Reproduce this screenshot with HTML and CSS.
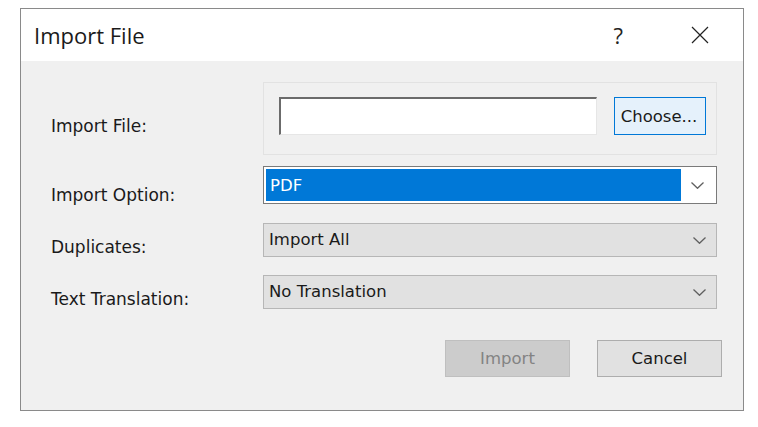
FILE: index.html
```html
<!DOCTYPE html>
<html lang="en">
<head>
<meta charset="utf-8">
<title>Import File</title>
<link rel="stylesheet" href="styles.css">
</head>
<body>
<div class="dialog">
  <div class="titlebar">
    <span class="title">Import File</span>
    <div class="title-actions">
      <span class="help">?</span>
      <svg class="close" width="18" height="18" viewBox="0 0 18 18">
        <path d="M1 1 L17 17 M17 1 L1 17" stroke="#222" stroke-width="1.2" fill="none"/>
      </svg>
    </div>
  </div>
  <div class="body">
    <div class="row">
      <span class="label">Import File:</span>
      <div class="filegroup">
        <div class="textinput"></div>
        <button class="btn btn-choose">Choose...</button>
      </div>
    </div>
    <div class="row row-option">
      <span class="label label-low">Import Option:</span>
      <div class="combo combo-open">
        <span class="combo-selected">PDF</span>
        <span class="combo-arrow"><svg width="13" height="7" viewBox="0 0 13 7"><path d="M0.5 0.5 L6.5 6.3 L12.5 0.5" stroke="#606060" stroke-width="1.3" fill="none"/></svg></span>
      </div>
    </div>
    <div class="row row-dup">
      <span class="label">Duplicates:</span>
      <div class="combo">
        <span class="combo-text">Import All</span>
        <span class="combo-arrow"><svg width="13" height="7" viewBox="0 0 13 7"><path d="M0.5 0.5 L6.5 6.3 L12.5 0.5" stroke="#606060" stroke-width="1.3" fill="none"/></svg></span>
      </div>
    </div>
    <div class="row row-trans">
      <span class="label">Text Translation:</span>
      <div class="combo">
        <span class="combo-text">No Translation</span>
        <span class="combo-arrow"><svg width="13" height="7" viewBox="0 0 13 7"><path d="M0.5 0.5 L6.5 6.3 L12.5 0.5" stroke="#606060" stroke-width="1.3" fill="none"/></svg></span>
      </div>
    </div>
    <div class="footer">
      <button class="btn btn-action btn-disabled">Import</button>
      <button class="btn btn-action">Cancel</button>
    </div>
  </div>
</div>
</body>
</html>
```

FILE: styles.css
```css
* { box-sizing: border-box; }

html, body {
  margin: 0;
  padding: 0;
  background: #ffffff;
}

body {
  font-family: "DejaVu Sans", Tahoma, sans-serif;
  font-size: 16.5px;
  color: #1a1a1a;
}

.dialog {
  margin: 8px 0 0 20px;
  width: 724px;
  height: 403px;
  border: 1px solid #8a8a8a;
  display: flex;
  flex-direction: column;
  background: #f0f0f0;
}

.titlebar {
  height: 52px;
  flex: none;
  background: #ffffff;
  display: flex;
  align-items: center;
  justify-content: space-between;
  padding: 0 34px 0 13px;
}

.title {
  font-family: "Open Sans", "Noto Sans", sans-serif;
  font-size: 22px;
  color: #1a1a1a;
  line-height: 1;
}

.title-actions {
  display: flex;
  align-items: center;
  gap: 68px;
}

.help {
  font-family: "Open Sans", "Noto Sans", sans-serif;
  font-size: 22px;
  line-height: 1;
  color: #222;
}

.close { display: block; }

.body {
  flex: 1;
  padding: 21px 21px 0 30px;
  display: flex;
  flex-direction: column;
}

.row {
  display: flex;
  align-items: center;
}

.label {
  width: 212px;
  flex: none;
  padding-top: 14px;
  line-height: 18px;
  font-size: 17px;
  color: #1a1a1a;
}

.label-low { padding-top: 19px; }

.filegroup {
  width: 454px;
  height: 73px;
  border: 1px solid #e2e2e2;
  padding: 14px 0 0 15px;
  display: flex;
  align-items: flex-start;
  gap: 17px;
}

.textinput {
  width: 318px;
  height: 38px;
  background: #fff;
  border-top: 2px solid #6b6b6b;
  border-left: 2px solid #6b6b6b;
  border-right: 1px solid #e6e6e6;
  border-bottom: 1px solid #e6e6e6;
}

.btn {
  font-family: "DejaVu Sans", Tahoma, sans-serif;
  font-size: 16.5px;
  color: #1a1a1a;
  background: #e1e1e1;
  border: 1px solid #adadad;
  padding: 0;
  margin: 0;
}

.btn-choose {
  width: 92px;
  height: 38px;
  background: #e5f1fb;
  border-color: #0078d7;
  padding-right: 2px;
}

.row-option { margin-top: 11px; }
.row-dup { margin-top: 19px; }
.row-trans { margin-top: 18px; }

.combo {
  width: 454px;
  height: 34px;
  background: #e1e1e1;
  border: 1px solid #b6b6b6;
  display: flex;
  align-items: center;
}

.combo-text {
  flex: 1;
  padding-left: 5px;
  line-height: 20px;
}

.combo-open {
  height: 38px;
  background: #fff;
  border-color: #7a7a7a;
  padding: 2px;
  align-items: stretch;
}

.combo-selected {
  flex: 1;
  background: #0078d7;
  color: #fff;
  padding-left: 4px;
  display: flex;
  align-items: center;
}

.combo-arrow {
  width: 33px;
  flex: none;
  display: flex;
  align-items: center;
  justify-content: center;
}

.combo-arrow svg { display: block; }

.footer {
  margin-top: 31px;
  display: flex;
  justify-content: flex-end;
  gap: 27px;
}

.btn-action {
  width: 125px;
  height: 37px;
}

.btn-disabled {
  background: #cccccc;
  border-color: #bfbfbf;
  color: #838383;
}
```
